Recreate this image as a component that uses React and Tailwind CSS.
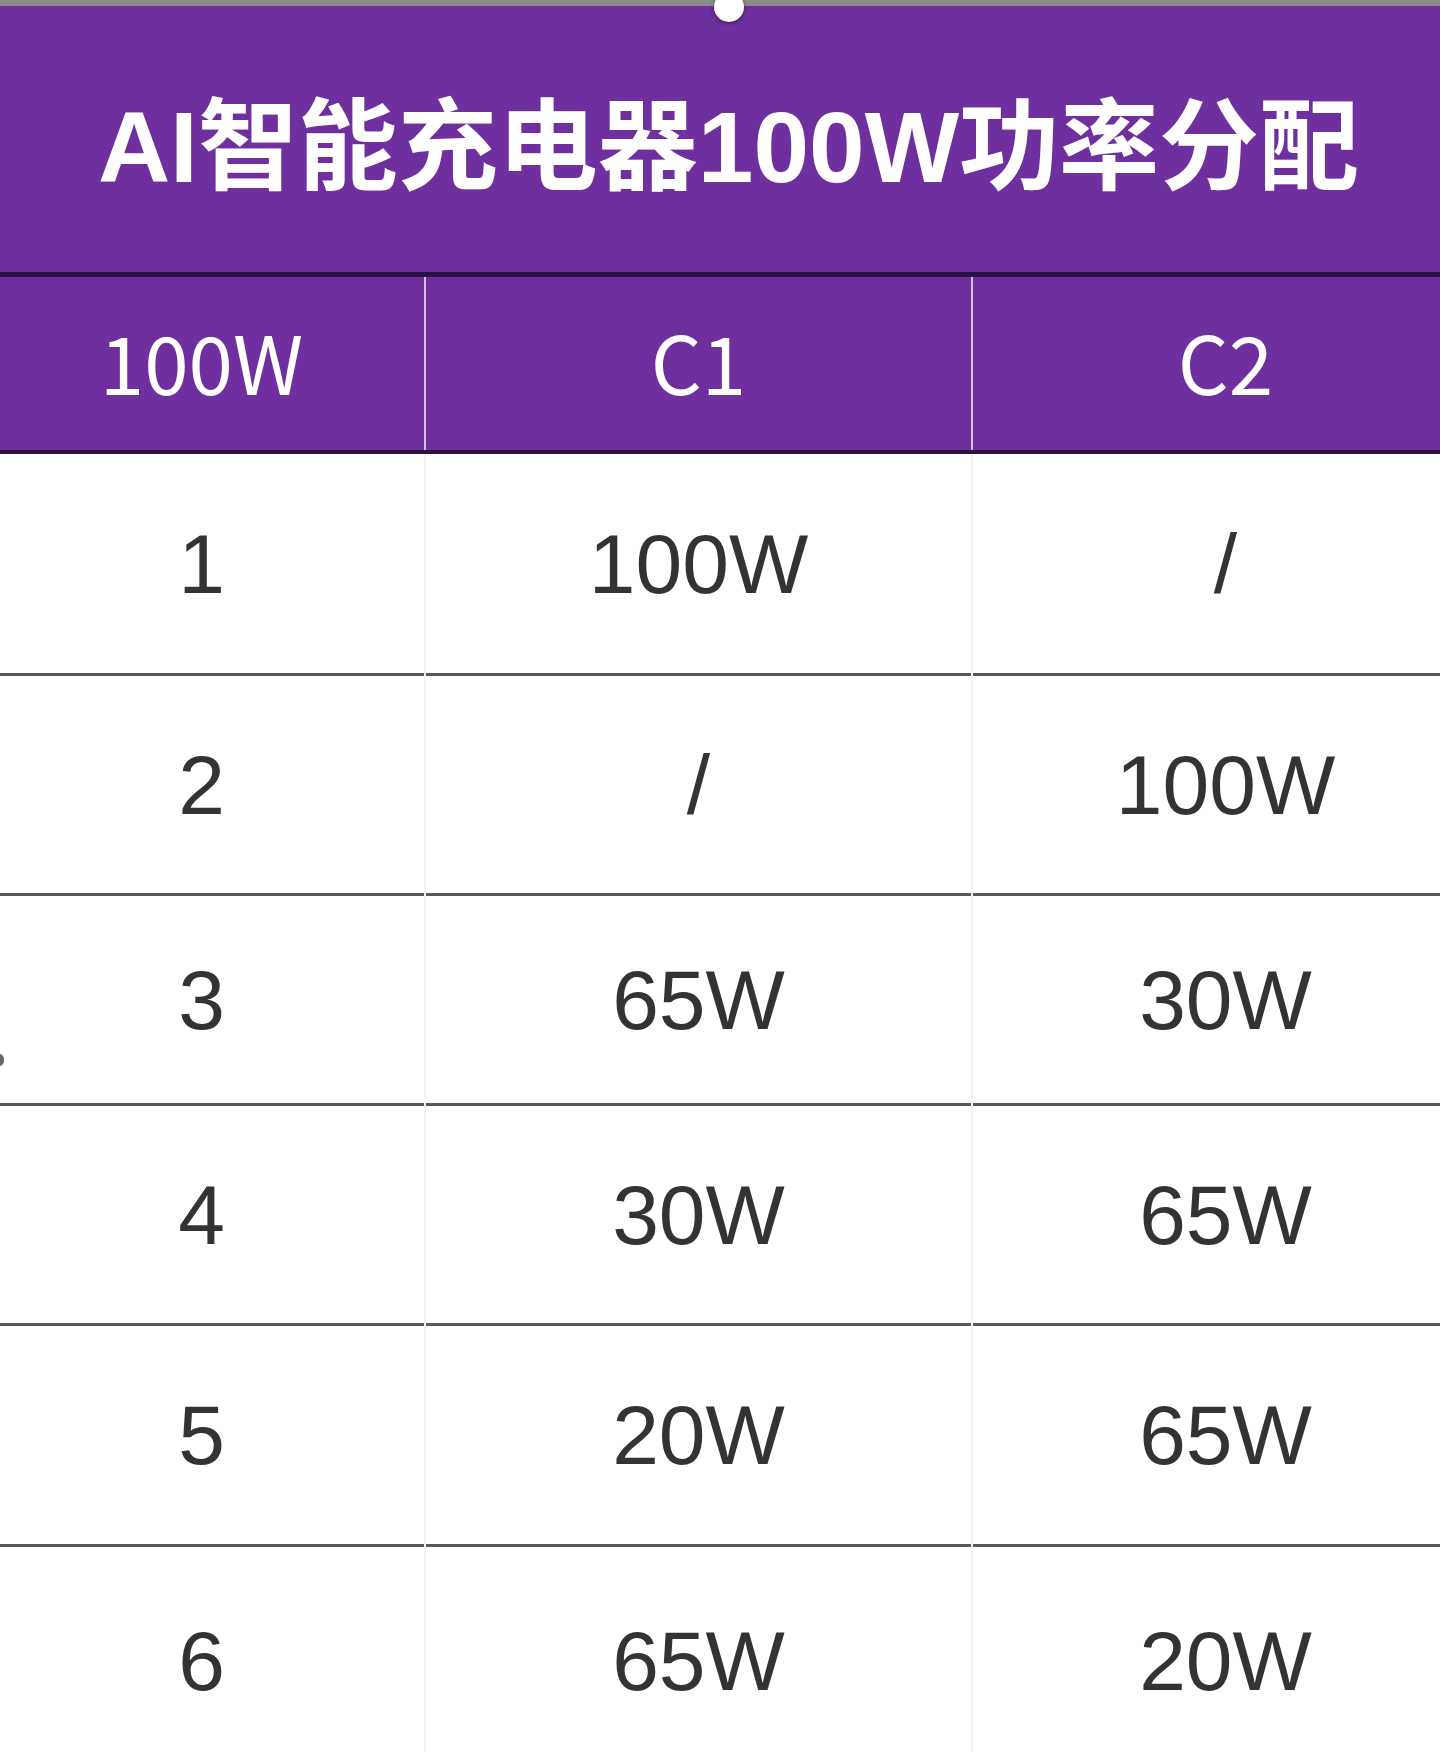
import React from "react";

const rows = [
  ["1", "100W", "/", "h-[222px]"],
  ["2", "/", "100W", "h-[220px]"],
  ["3", "65W", "30W", "h-[210px]"],
  ["4", "30W", "65W", "h-[220px]"],
  ["5", "20W", "65W", "h-[221px]"],
  ["6", "65W", "20W", "h-[230px]"],
];

function BodyCell({ children, w }) {
  return (
    <div
      className={`${w} flex items-center justify-center bg-white border-b-[3px] border-[#585858]`}
    >
      <span className="text-[84px] leading-none text-[#333333] font-['Liberation_Sans',Arial,sans-serif]">
        {children}
      </span>
    </div>
  );
}

export default function App() {
  return (
    <div className="relative w-[1440px] h-[1752px] overflow-hidden bg-white">
      <div className="ml-[-21px] w-[1499px] flex flex-col">
        <div className="h-[6px] bg-[#8c8c8c]" />
        <div className="h-[271px] bg-[#6f2f9e] flex items-center justify-center pt-[16px] border-b-[5px] border-[#2c1242]">
          <h1 className="text-[100px] leading-none font-bold text-white tracking-[0px] font-['Liberation_Sans','Noto_Sans_CJK_SC',sans-serif]">
            AI智能充电器100W功率分配
          </h1>
        </div>
        <div className="h-[177px] flex bg-[#d4c3e4] gap-x-[2px] border-b-[4px] border-[#2a1636]">
          <div className="w-[445px] bg-[#6f2f9e] flex items-center justify-center pb-[8px]">
            <span className="text-[80px] leading-none text-white font-['Noto_Sans_CJK_SC',sans-serif]">100W</span>
          </div>
          <div className="w-[545px] bg-[#6f2f9e] flex items-center justify-center pb-[8px]">
            <span className="text-[80px] leading-none text-white font-['Noto_Sans_CJK_SC',sans-serif]">C1</span>
          </div>
          <div className="w-[505px] bg-[#6f2f9e] flex items-center justify-center pb-[8px]">
            <span className="text-[80px] leading-none text-white font-['Noto_Sans_CJK_SC',sans-serif]">C2</span>
          </div>
        </div>
        {rows.map(([a, b, c, h]) => (
          <div key={a} className={`${h} flex gap-x-[2px] bg-[#f1f3f8]`}>
            <BodyCell w="w-[445px]">{a}</BodyCell>
            <BodyCell w="w-[545px]">{b}</BodyCell>
            <BodyCell w="w-[505px]">{c}</BodyCell>
          </div>
        ))}
      </div>
      <div className="absolute left-[714px] top-[-8px] w-[30px] h-[30px] rounded-full bg-white shadow-[0_1px_4px_rgba(0,0,0,0.45)]" />
      <div className="absolute left-[-6px] top-[1054px] w-[10px] h-[12px] rounded-full bg-[#666]" />
    </div>
  );
}
